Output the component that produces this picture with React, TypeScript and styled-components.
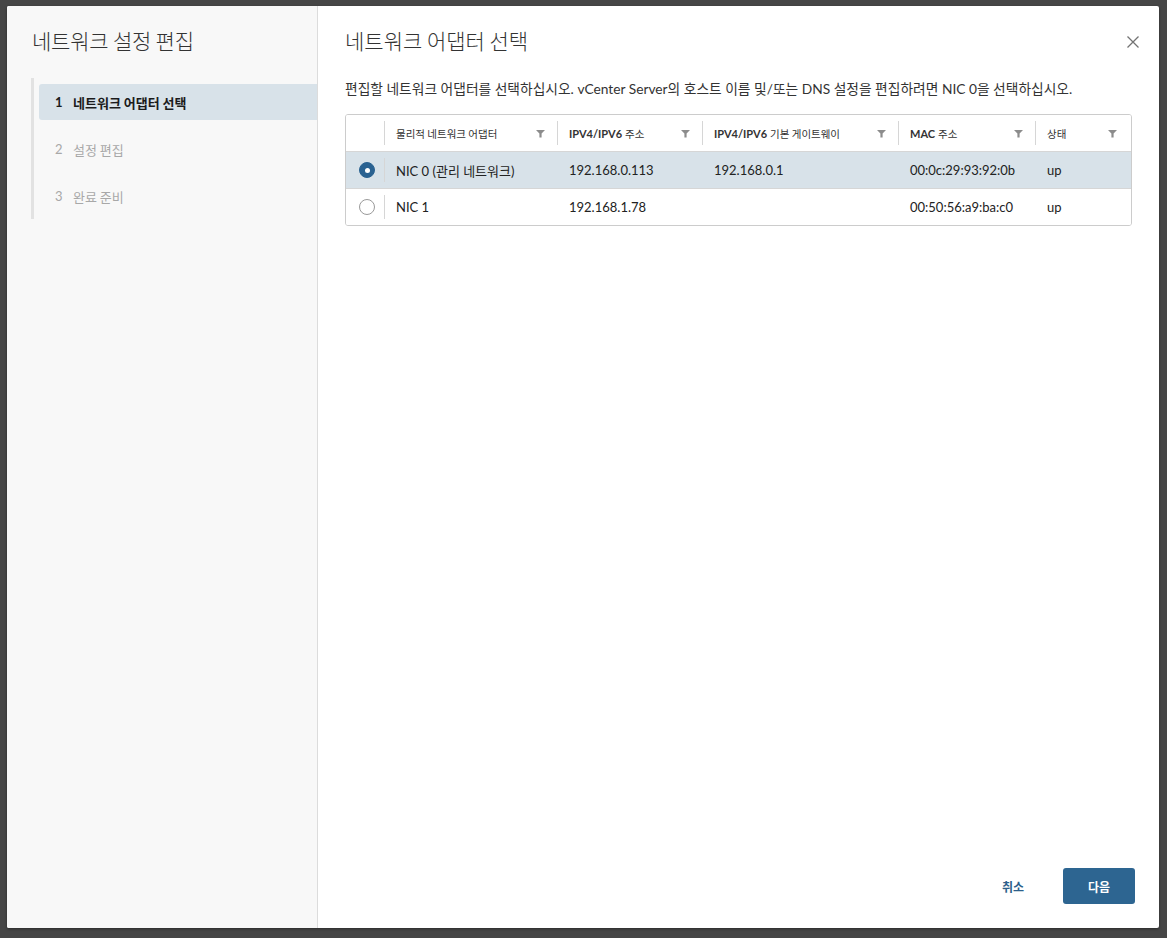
import React from "react";
import styled, { createGlobalStyle } from "styled-components";

const Global = createGlobalStyle`
  html, body { margin: 0; padding: 0; }
  body {
    background: #464646;
    font-family: Lato, "Noto Sans CJK KR", sans-serif;
    color: #222;
    -webkit-font-smoothing: antialiased;
  }
`;

const Backdrop = styled.div`
  width: 1167px;
  height: 938px;
  box-sizing: border-box;
  padding: 6px 8px 10px 7px;
  background: #464646;
`;

const Dialog = styled.div`
  width: 1152px;
  height: 922px;
  display: flex;
  background: #fff;
  box-shadow: 0 1px 3px rgba(0, 0, 0, 0.4);
  border-radius: 2px;
  overflow: hidden;
`;

const Side = styled.aside`
  width: 311px;
  flex: none;
  background: #f8f8f8;
  border-right: 1px solid #dcdcdc;
  box-sizing: border-box;
  padding: 20px 0 0 24px;
`;

const SideTitle = styled.h2`
  margin: 0 0 0 1px;
  font-family: "Noto Sans CJK KR", sans-serif;
  font-weight: 300;
  font-size: 21px;
  line-height: 28px;
  color: #333;
  letter-spacing: -0.2px;
`;

const Stepper = styled.ol`
  list-style: none;
  margin: 24px 0 0 0;
  padding: 6px 0 5px 5px;
  border-left: 3px solid #e2e2e2;
  display: flex;
  flex-direction: column;
  gap: 11px;
`;

const Step = styled.li<{ $active?: boolean }>`
  height: 36px;
  display: flex;
  align-items: center;
  gap: 10px;
  padding-left: 16px;
  border-radius: 3px 0 0 3px;
  background: ${(p) => (p.$active ? "#d8e2e9" : "transparent")};
  color: ${(p) => (p.$active ? "#1b1b1b" : "#a8a8a8")};
  font-weight: ${(p) => (p.$active ? 700 : 400)};
  font-size: 13px;
  font-family: "Noto Sans CJK KR", sans-serif;
`;

const StepNum = styled.span`
  font-family: Lato, sans-serif;
  width: 8px;
`;

const Main = styled.section`
  flex: 1;
  display: flex;
  flex-direction: column;
  padding: 20px 24px 24px 27px;
  box-sizing: border-box;
`;

const Header = styled.div`
  display: flex;
  align-items: flex-start;
  justify-content: space-between;
`;

const Title = styled.h1`
  margin: 0;
  font-family: "Noto Sans CJK KR", sans-serif;
  font-weight: 300;
  font-size: 21px;
  line-height: 28px;
  color: #333;
`;

const CloseBtn = styled.button`
  border: 0;
  background: none;
  padding: 0;
  margin: 10px -4px 0 0;
  width: 12px;
  height: 12px;
  cursor: pointer;
  display: flex;
`;

const Desc = styled.p`
  margin: 25px 0 0 0;
  font-size: 13.75px;
  line-height: 20px;
  color: #333;
  font-family: Lato, "Noto Sans CJK KR", sans-serif;
`;

const Table = styled.div`
  margin-top: 15px;
  width: 785px;
  border: 1px solid #cccccc;
  border-radius: 3px;
  overflow: hidden;
`;

const Row = styled.div<{ $selected?: boolean; $last?: boolean }>`
  display: grid;
  grid-template-columns: 38px 173px 145px 196px 137px 94px;
  height: 36px;
  align-items: center;
  background: ${(p) => (p.$selected ? "#d8e2e9" : "#fff")};
  border-bottom: ${(p) => (p.$last ? "0" : "1px solid #d6d6d6")};
`;

const Cell = styled.div<{ $sep?: boolean }>`
  position: relative;
  height: 100%;
  display: flex;
  align-items: center;
  padding: 0 12px;
  box-sizing: border-box;
  font-size: 13px;
  color: #222;
  white-space: nowrap;
  &::before {
    content: "";
    display: ${(p) => (p.$sep ? "block" : "none")};
    position: absolute;
    left: 0;
    top: 6px;
    bottom: 6px;
    width: 1px;
    background: #d6d6d6;
  }
`;

const HeadCell = styled(Cell)`
  justify-content: space-between;
  font-size: 11px;
  color: #333;
  padding-right: 12px;
`;

const HeadLabel = styled.span`
  display: flex;
  align-items: baseline;
  gap: 3px;
`;

const Latin = styled.span`
  font-family: Lato, sans-serif;
  font-weight: 700;
  font-size: 11px;
`;

const Hangul = styled.span`
  font-family: "Noto Sans CJK KR", sans-serif;
  font-weight: 400;
  font-size: 10.5px;
`;

const RadioCell = styled(Cell)`
  justify-content: center;
  padding: 0 0 0 4px;
`;

const Radio = styled.span<{ $on?: boolean }>`
  width: 16px;
  height: 16px;
  border-radius: 50%;
  box-sizing: border-box;
  border: 1px solid ${(p) => (p.$on ? "#2a6291" : "#9a9a9a")};
  background: ${(p) => (p.$on ? "#2a6291" : "#fff")};
  display: flex;
  align-items: center;
  justify-content: center;
  &::after {
    content: "";
    display: ${(p) => (p.$on ? "block" : "none")};
    width: 5px;
    height: 5px;
    border-radius: 50%;
    background: #fff;
  }
`;

const Spacer = styled.div`
  flex: 1;
`;

const Footer = styled.div`
  display: flex;
  justify-content: flex-end;
  gap: 14px;
`;

const Button = styled.button<{ $primary?: boolean }>`
  width: 72px;
  height: 36px;
  border-radius: 3px;
  border: 0;
  background: ${(p) => (p.$primary ? "#2d6591" : "transparent")};
  color: ${(p) => (p.$primary ? "#fff" : "#2d5f8a")};
  font-family: "Noto Sans CJK KR", sans-serif;
  font-size: 12px;
  font-weight: 700;
  cursor: pointer;
`;

const Filter = () => (
  <svg width="9" height="9" viewBox="0 0 9 9">
    <path d="M0 1 H9 L5.6 4.6 V8.5 H3.4 V4.6 Z" fill="#8c8c8c" />
  </svg>
);

type Part = { t: string; ko?: boolean };

const columns: Part[][] = [
  [{ t: "물리적 네트워크 어댑터", ko: true }],
  [{ t: "IPV4/IPV6" }, { t: "주소", ko: true }],
  [{ t: "IPV4/IPV6" }, { t: "기본 게이트웨이", ko: true }],
  [{ t: "MAC" }, { t: "주소", ko: true }],
  [{ t: "상태", ko: true }],
];

const rows = [
  {
    selected: true,
    cells: ["NIC 0 (관리 네트워크)", "192.168.0.113", "192.168.0.1", "00:0c:29:93:92:0b", "up"],
  },
  {
    selected: false,
    cells: ["NIC 1", "192.168.1.78", "", "00:50:56:a9:ba:c0", "up"],
  },
];

export default function App() {
  return (
    <>
      <Global />
      <Backdrop>
        <Dialog>
          <Side>
            <SideTitle>네트워크 설정 편집</SideTitle>
            <Stepper>
              <Step $active>
                <StepNum>1</StepNum>네트워크 어댑터 선택
              </Step>
              <Step>
                <StepNum>2</StepNum>설정 편집
              </Step>
              <Step>
                <StepNum>3</StepNum>완료 준비
              </Step>
            </Stepper>
          </Side>
          <Main>
            <Header>
              <Title>네트워크 어댑터 선택</Title>
              <CloseBtn aria-label="close">
                <svg width="12" height="12" viewBox="0 0 12 12">
                  <path d="M0.5 0.5 L11.5 11.5 M11.5 0.5 L0.5 11.5" stroke="#737373" strokeWidth="1.3" fill="none" />
                </svg>
              </CloseBtn>
            </Header>
            <Desc>
              편집할 네트워크 어댑터를 선택하십시오. vCenter Server의 호스트 이름 및/또는 DNS 설정을 편집하려면 NIC 0을 선택하십시오.
            </Desc>
            <Table>
              <Row>
                <Cell />
                {columns.map((parts, i) => (
                  <HeadCell key={i} $sep>
                    <HeadLabel>
                      {parts.map((p, k) =>
                        p.ko ? <Hangul key={k}>{p.t}</Hangul> : <Latin key={k}>{p.t}</Latin>
                      )}
                    </HeadLabel>
                    <Filter />
                  </HeadCell>
                ))}
              </Row>
              {rows.map((r, i) => (
                <Row key={i} $selected={r.selected} $last={i === rows.length - 1}>
                  <RadioCell>
                    <Radio $on={r.selected} />
                  </RadioCell>
                  {r.cells.map((c, j) => (
                    <Cell key={j} $sep={j === 0}>
                      {c}
                    </Cell>
                  ))}
                </Row>
              ))}
            </Table>
            <Spacer />
            <Footer>
              <Button>취소</Button>
              <Button $primary>다음</Button>
            </Footer>
          </Main>
        </Dialog>
      </Backdrop>
    </>
  );
}
